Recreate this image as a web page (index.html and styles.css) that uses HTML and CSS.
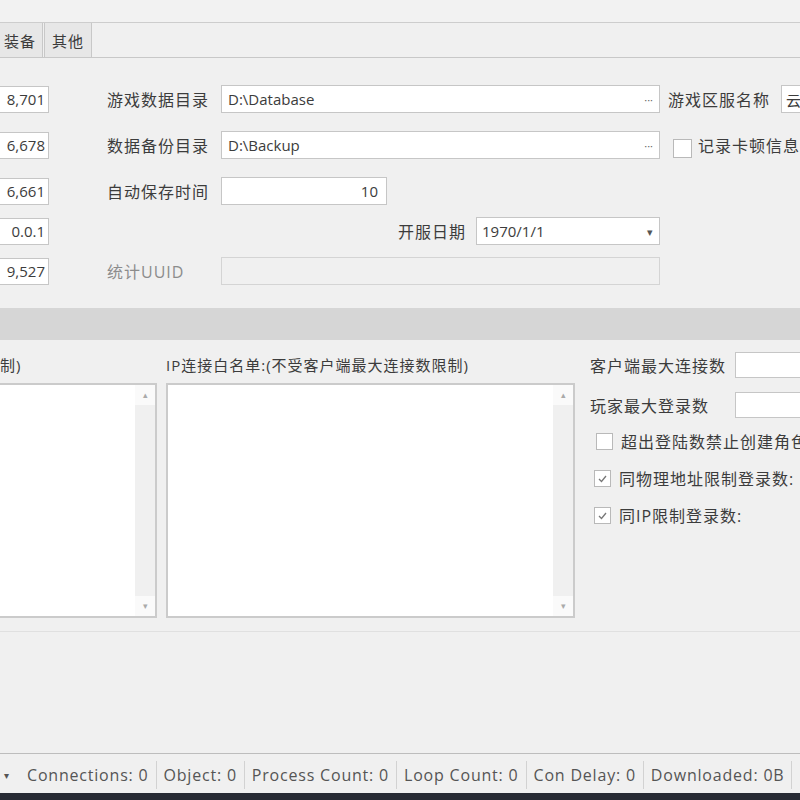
FILE: index.html
```html
<!DOCTYPE html>
<html lang="zh-CN">
  <head>
    <meta charset="UTF-8" />
    <meta name="viewport" content="width=device-width, initial-scale=1.0" />
    <title>Server Settings</title>
    <link rel="stylesheet" href="styles.css">
  </head>
  <body>
    <div class="window">
      <div class="topbar"></div>

      <div class="tabs">
        <div class="tab tab-cut">装备</div>
        <div class="tab">其他</div>
      </div>

      <!-- general settings -->
      <div class="form">
        <div class="row">
          <div class="num">8,701</div>
          <div class="label">游戏数据目录</div>
          <div class="field wide"><span>D:\Database</span><span class="dots">···</span></div>
          <div class="label side">游戏区服名称</div>
          <div class="field server">云</div>
        </div>
        <div class="row spaced">
          <div class="num">6,678</div>
          <div class="label">数据备份目录</div>
          <div class="field wide"><span>D:\Backup</span><span class="dots">···</span></div>
          <div class="check top-check"></div>
          <div class="check-label">记录卡顿信息</div>
        </div>
        <div class="row spaced">
          <div class="num">6,661</div>
          <div class="label">自动保存时间</div>
          <div class="field short">10</div>
        </div>
        <div class="row tight">
          <div class="num">0.0.1</div>
          <div class="spacer"></div>
          <div class="label date-label">开服日期</div>
          <div class="field select"><span>1970/1/1</span><span class="arrow">▾</span></div>
        </div>
        <div class="row tight">
          <div class="num">9,527</div>
          <div class="label muted">统计UUID</div>
          <div class="field wide disabled"></div>
        </div>
      </div>

      <div class="band"></div>

      <!-- connection limits -->
      <div class="lower">
        <div class="col col-left">
          <div class="caption">制)</div>
          <div class="list">
            <div class="scroll"><span class="scroll-btn">▴</span><span class="scroll-btn">▾</span></div>
          </div>
        </div>
        <div class="col col-mid">
          <div class="caption">IP连接白名单:(不受客户端最大连接数限制)</div>
          <div class="list">
            <div class="scroll"><span class="scroll-btn">▴</span><span class="scroll-btn">▾</span></div>
          </div>
        </div>
        <div class="col col-right">
          <div class="opt">
            <div class="label opt-label">客户端最大连接数</div>
            <div class="field limit"></div>
          </div>
          <div class="opt opt-gap">
            <div class="label opt-label">玩家最大登录数</div>
            <div class="field limit"></div>
          </div>
          <div class="opt check-row first">
            <div class="check"></div>
            <div class="check-label">超出登陆数禁止创建角色</div>
          </div>
          <div class="opt check-row">
            <div class="check checked">
              <svg width="11" height="11" viewBox="0 0 11 11"><path d="M2 6 L4.5 8.5 L9 3" fill="none" stroke="#777" stroke-width="1.3"/></svg>
            </div>
            <div class="check-label">同物理地址限制登录数:</div>
          </div>
          <div class="opt check-row">
            <div class="check checked">
              <svg width="11" height="11" viewBox="0 0 11 11"><path d="M2 6 L4.5 8.5 L9 3" fill="none" stroke="#777" stroke-width="1.3"/></svg>
            </div>
            <div class="check-label">同IP限制登录数:</div>
          </div>
        </div>
      </div>

      <div class="empty"></div>

      <div class="status">
        <div class="status-drop">▾</div>
        <div class="status-item first">Connections: 0</div>
        <div class="status-item">Object: 0</div>
        <div class="status-item">Process Count: 0</div>
        <div class="status-item">Loop Count: 0</div>
        <div class="status-item">Con Delay: 0</div>
        <div class="status-item">Downloaded: 0B</div>
        <div class="status-item"></div>
      </div>

      <div class="taskbar"></div>
    </div>
  </body>
</html>
```

FILE: styles.css
```css
body {
  margin: 0;
  background-color: #f0f0f0;
  font-family: "Open Sans", "Noto Sans CJK SC", sans-serif;
  font-size: 15px;
  color: #3c3c3c;
  overflow: hidden;
}

.window {
  width: 800px;
  height: 800px;
  display: flex;
  flex-direction: column;
  overflow: hidden;
}

.topbar {
  flex: none;
  height: 22px;
  background-color: #f2f2f2;
  border-bottom: 1px solid #cdcdcd;
}

.tabs {
  flex: none;
  height: 34px;
  display: flex;
  border-bottom: 1px solid #c8c8c8;
}

.tab {
  display: flex;
  align-items: center;
  padding: 0 7px;
  background-color: #e7e7e7;
  border-left: 1px solid #c8c8c8;
  border-right: 1px solid #c8c8c8;
  font-size: 15px;
  letter-spacing: 1px;
}

.tab-cut {
  width: 43px;
  box-sizing: border-box;
  padding: 0 6px 0 0;
  justify-content: flex-end;
  border-left: none;
  margin-right: 1px;
}

.form {
  flex: none;
  height: 250px;
  box-sizing: border-box;
  padding-top: 27px;
}

.row {
  display: flex;
  align-items: center;
  height: 28px;
}

.row.spaced {
  margin-top: 18px;
}

.row.tight {
  margin-top: 12px;
}

.num {
  flex: none;
  width: 49px;
  height: 27px;
  box-sizing: border-box;
  background-color: #fff;
  border: 1px solid #c6c6c6;
  border-left: none;
  text-align: right;
  padding-right: 3px;
  line-height: 25px;
  margin-right: 58px;
}

.label {
  flex: none;
  width: 114px;
  font-size: 16px;
  letter-spacing: 1px;
  white-space: nowrap;
}

.label.muted {
  color: #8c8c8c;
}

.field {
  flex: none;
  height: 28px;
  box-sizing: border-box;
  display: flex;
  align-items: center;
  justify-content: space-between;
  padding: 0 6px;
  background-color: #fff;
  border: 1px solid #c6c6c6;
  white-space: nowrap;
}

.field.wide {
  width: 439px;
}

.field.short {
  width: 166px;
  justify-content: flex-end;
  padding-right: 8px;
}

.field.select {
  width: 184px;
  padding-left: 5px;
}

.field.server {
  width: 40px;
  padding-left: 4px;
}

.field.disabled {
  background-color: #f0f0f0;
  border-color: #d4d4d4;
}

.dots {
  font-size: 11px;
  color: #666;
}

.arrow {
  font-size: 11px;
  color: #555;
}

.label.side {
  width: auto;
  margin-left: 8px;
  margin-right: 11px;
}

.spacer {
  flex: none;
  width: 291px;
}

.label.date-label {
  width: 78px;
}

.check {
  flex: none;
  width: 17px;
  height: 17px;
  box-sizing: border-box;
  background-color: #fff;
  border: 1px solid #b9b9b9;
  display: flex;
  align-items: center;
  justify-content: center;
}

.top-check {
  width: 19px;
  height: 19px;
  margin-left: 13px;
  margin-top: 6px;
}

.check-label {
  margin-left: 6px;
  font-size: 16px;
  letter-spacing: 1px;
  white-space: nowrap;
}

.band {
  flex: none;
  height: 32px;
  background-color: #d6d6d6;
}

.lower {
  flex: none;
  height: 292px;
  display: flex;
  box-sizing: border-box;
  padding-top: 12px;
  border-bottom: 1px solid #e0e0e0;
}

.col {
  flex: none;
  display: flex;
  flex-direction: column;
}

.col-left {
  width: 157px;
}

.col-mid {
  width: 409px;
  margin-left: 9px;
}

.col-right {
  flex: 1;
  margin-left: 15px;
  overflow: hidden;
}

.caption {
  height: 26px;
  line-height: 26px;
  font-size: 15px;
  letter-spacing: 1px;
  white-space: nowrap;
}

.list {
  margin-top: 5px;
  height: 235px;
  box-sizing: border-box;
  background-color: #fff;
  border: 2px solid #cbcbcb;
  display: flex;
  justify-content: flex-end;
}

.col-left .list {
  border-left: none;
}

.scroll {
  width: 20px;
  background-color: #f0f0f0;
  display: flex;
  flex-direction: column;
  justify-content: space-between;
}

.scroll-btn {
  height: 20px;
  background-color: #fafafa;
  color: #aaa;
  font-size: 9px;
  text-align: center;
  line-height: 20px;
}

.opt {
  display: flex;
  align-items: center;
  height: 26px;
}

.opt-gap {
  margin-top: 14px;
}

.opt-label {
  width: 145px;
}

.field.limit {
  width: 80px;
  height: 26px;
}

.check-row {
  margin-top: 11px;
  padding-left: 4px;
}

.check-row.first {
  margin-top: 10px;
  padding-left: 6px;
}

.check-row .check-label {
  margin-left: 8px;
}

.empty {
  flex: 1;
  border-bottom: 1px solid #bdbdbd;
}

.status {
  flex: none;
  height: 39px;
  display: flex;
  align-items: center;
  padding-top: 2px;
  box-sizing: border-box;
  font-size: 16px;
  letter-spacing: 0.8px;
  color: #555;
  white-space: nowrap;
  overflow: hidden;
}

.status-drop {
  flex: none;
  width: 20px;
  font-size: 10px;
  padding-left: 4px;
  box-sizing: border-box;
}

.status-item {
  flex: none;
  height: 28px;
  line-height: 28px;
  padding: 0 7px;
  border-left: 1px solid #d2d2d2;
}

.status-item.first {
  border-left: none;
}

.taskbar {
  flex: none;
  height: 7px;
  background-color: #272b34;
}
```
